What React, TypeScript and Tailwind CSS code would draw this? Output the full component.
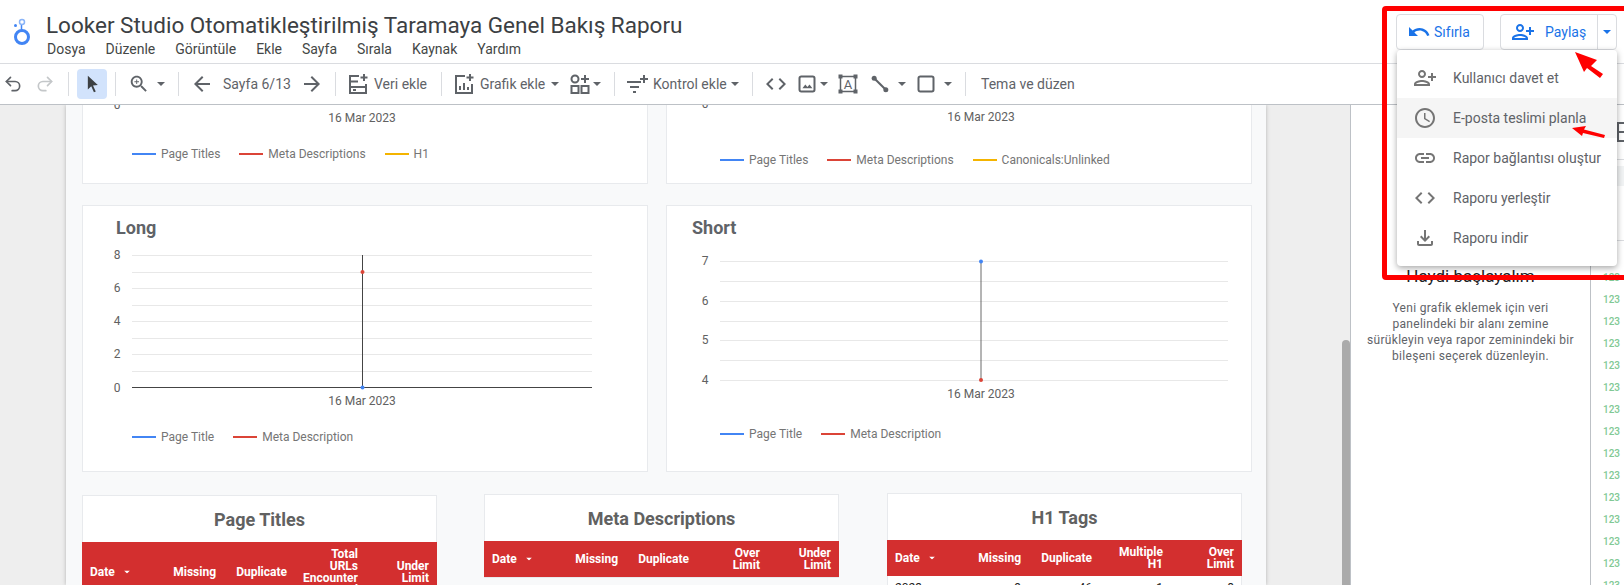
import React from 'react';
import { Undo2, Redo2 } from 'lucide-react';

const Caret = ({ className = 'text-[#5f6368]' }: { className?: string }) => (
  <svg width="8" height="4" viewBox="0 0 8 4" className={`shrink-0 ${className}`}>
    <path d="M0 0h8L4 4z" fill="currentColor" />
  </svg>
);

const Sep = ({ className }: { className: string }) => <div className={`w-px h-6 bg-[#dadce0] shrink-0 ${className}`} />;

const Icon = ({ size = 24, className = '', children }: { size?: number; className?: string; children: React.ReactNode }) => (
  <svg width={size} height={size} viewBox="0 0 24 24" fill="#5f6368" className={`shrink-0 ${className}`}>
    {children}
  </svg>
);

const PersonAdd = ({ fill }: { fill: string }) => (
  <svg width="24" height="24" viewBox="0 0 24 24" fill={fill} className="shrink-0">
    <path
      transform="matrix(-1 0 0 1 24 0)"
      d="M15 12c2.21 0 4-1.79 4-4s-1.79-4-4-4-4 1.79-4 4 1.79 4 4 4zm0-6c1.1 0 2 .9 2 2s-.9 2-2 2-2-.9-2-2 .9-2 2-2zm0 8c-2.67 0-8 1.34-8 4v2h16v-2c0-2.66-5.33-4-8-4zm-6 4c.22-.72 3.31-2 6-2 2.7 0 5.8 1.29 6 2H9zm-3-3v-3h3v-2H6V7H4v3H1v2h3v3h2z"
    />
  </svg>
);

const CodeIcon = ({ fill = '#5f6368' }: { fill?: string }) => (
  <svg width="24" height="24" viewBox="0 0 24 24" fill={fill} className="shrink-0">
    <path d="M9.4 16.6L4.8 12l4.6-4.6L8 6l-6 6 6 6 1.4-1.4zm5.2 0l4.6-4.6-4.6-4.6L16 6l6 6-6 6-1.4-1.4z" />
  </svg>
);

const Legend = ({ items, className }: { items: { color: string; label: string }[]; className: string }) => (
  <div className={`flex items-center gap-[19px] text-xs leading-4 text-[#757575] ${className}`}>
    {items.map((item) => (
      <div key={item.label} className="flex items-center gap-[5px]">
        <div className="w-6 h-0.5" style={{ backgroundColor: item.color }} />
        <span>{item.label}</span>
      </div>
    ))}
  </div>
);

const Table = ({ title, head, row, className }: { title: string; head: string[][]; row?: string[]; className: string }) => (
  <div className={`w-[355px] bg-white border border-[#e8eaed] ${className}`}>
    <div className="h-[46px] flex items-center justify-center text-[18px] font-bold text-[#616161]">{title}</div>
    <div className="-mx-px grid grid-cols-[1fr_71px_71px_71px_71px] items-center bg-[#d32f2f] text-white text-xs font-bold leading-3 py-1.5 min-h-9">
      <div className="pl-2 flex items-center gap-2">
        Date
        <Caret className="text-white scale-75" />
      </div>
      {head.map((lines) => (
        <div key={lines.join()} className="pr-2 text-right">
          {lines.map((line) => (
            <div key={line}>{line}</div>
          ))}
        </div>
      ))}
    </div>
    {row && (
      <div className="-mx-px grid grid-cols-[1fr_71px_71px_71px_71px] text-xs leading-3 text-[#212121] pt-1.5">
        {row.map((v, i) => (
          <div key={i} className={i === 0 ? 'pl-2' : 'pr-2 text-right'}>
            {v}
          </div>
        ))}
      </div>
    )}
  </div>
);

const longGrid = [14, 31, 47, 64, 80, 97, 113, 130];
const longTicks = [
  { y: 14, t: '8' },
  { y: 47, t: '6' },
  { y: 80, t: '4' },
  { y: 113, t: '2' },
  { y: 147, t: '0' },
];
const shortGrid = [20, 40, 60, 80, 99, 119, 139];
const shortTicks = [
  { y: 20, t: '7' },
  { y: 60, t: '6' },
  { y: 99, t: '5' },
  { y: 139, t: '4' },
];

const menuItems = [
  { label: 'Kullanıcı davet et', icon: <PersonAdd fill="#757575" /> },
  {
    label: 'E-posta teslimi planla',
    active: true,
    icon: (
      <svg width="24" height="24" viewBox="0 0 24 24" fill="#757575" className="shrink-0">
        <path d="M11.99 2C6.47 2 2 6.48 2 12s4.47 10 9.99 10C17.52 22 22 17.52 22 12S17.52 2 11.99 2zM12 20c-4.42 0-8-3.58-8-8s3.58-8 8-8 8 3.58 8 8-3.58 8-8 8z" />
        <path d="M12.5 7H11v6l5.25 3.15.75-1.23-4.5-2.67z" />
      </svg>
    ),
  },
  {
    label: 'Rapor bağlantısı oluştur',
    icon: (
      <svg width="24" height="24" viewBox="0 0 24 24" fill="#757575" className="shrink-0">
        <path d="M3.9 12c0-1.71 1.39-3.1 3.1-3.1h4V7H7c-2.76 0-5 2.24-5 5s2.24 5 5 5h4v-1.9H7c-1.71 0-3.1-1.39-3.1-3.1zM8 13h8v-2H8v2zm9-6h-4v1.9h4c1.71 0 3.1 1.39 3.1 3.1s-1.39 3.1-3.1 3.1h-4V17h4c2.76 0 5-2.24 5-5s-2.24-5-5-5z" />
      </svg>
    ),
  },
  { label: 'Raporu yerleştir', icon: <CodeIcon fill="#757575" /> },
  {
    label: 'Raporu indir',
    icon: (
      <svg width="24" height="24" viewBox="0 0 24 24" fill="#757575" className="shrink-0">
        <path d="M18 15v3H6v-3H4v3c0 1.1.9 2 2 2h12c1.1 0 2-.9 2-2v-3h-2zm-1-4l-1.41-1.41L13 12.17V4h-2v8.17L8.41 9.59 7 11l5 5 5-5z" />
      </svg>
    ),
  },
];

const greenRows = Array.from({ length: 15 }, (_, i) => i);

export default function App() {
  return (
    <div className="relative w-[1624px] h-[585px] overflow-hidden bg-white flex flex-col [font-family:Roboto,sans-serif]">
      {/* title bar */}
      <div className="h-[64px] shrink-0 border-b border-[#dadce0] flex">
        <svg width="46" height="63" viewBox="0 0 46 63" className="shrink-0">
          <circle cx="22" cy="37" r="6.5" fill="none" stroke="#4285f4" strokeWidth="3" />
          <path d="M21.5 25v5" stroke="#4285f4" strokeWidth="1.5" />
          <circle cx="22" cy="22" r="2.5" fill="none" stroke="#8ab4f8" strokeWidth="1.5" />
          <circle cx="15.5" cy="25.5" r="1.5" fill="#4285f4" />
        </svg>
        <div>
          <div className="pt-[10px] h-[39px] text-[22.5px] leading-[30px] text-[#3c4043] whitespace-nowrap">
            Looker Studio Otomatikleştirilmiş Taramaya Genel Bakış Raporu
          </div>
          <div className="pl-px flex gap-5 text-[14px] leading-5 text-[#444746]">
            {['Dosya', 'Düzenle', 'Görüntüle', 'Ekle', 'Sayfa', 'Sırala', 'Kaynak', 'Yardım'].map((m) => (
              <span key={m}>{m}</span>
            ))}
          </div>
        </div>
      </div>

      {/* toolbar */}
      <div className="h-[41px] shrink-0 border-b border-[#bdc1c6] flex items-center pl-[3px] text-[14px] text-[#5f6368] whitespace-nowrap">
        <Undo2 size={20} strokeWidth={2} className="shrink-0 text-[#5f6368]" />
        <Redo2 size={20} strokeWidth={2} className="shrink-0 ml-3 text-[#c4c7c9]" />
        <Sep className="ml-[13px]" />
        <div className="ml-2 w-[30px] h-[30px] shrink-0 rounded-sm bg-[#d2e3fc] flex items-center justify-center">
          <Icon size={20}>
            <path d="M7 2l12 11.2-5.8.5 3.3 7.3-2.2 1-3.2-7.4L7 18.5V2z" fill="#3c4043" />
          </Icon>
        </div>
        <Sep className="ml-2" />
        <Icon size={22} className="ml-3">
          <path d="M15.5 14h-.79l-.28-.27C15.41 12.59 16 11.11 16 9.5 16 5.91 13.09 3 9.5 3S3 5.91 3 9.5 5.91 16 9.5 16c1.61 0 3.09-.59 4.23-1.57l.27.28v.79l5 4.99L20.49 19l-4.99-5zm-6 0C7.01 14 5 11.99 5 9.5S7.01 5 9.5 5 14 7.01 14 9.5 11.99 14 9.5 14z" />
          <path d="M12 10h-2v2H9v-2H7V9h2V7h1v2h2v1z" />
        </Icon>
        <div className="ml-[7px]"><Caret /></div>
        <Sep className="ml-[13px]" />
        <Icon className="ml-[11px]">
          <path d="M20 11H7.83l5.59-5.59L12 4l-8 8 8 8 1.41-1.41L7.83 13H20v-2z" />
        </Icon>
        <span className="ml-[9px] w-[67px]">Sayfa 6/13</span>
        <Icon className="ml-[10px]">
          <path d="M12 4l-1.41 1.41L16.17 11H4v2h12.17l-5.58 5.59L12 20l8-8z" />
        </Icon>
        <Sep className="ml-[11px]" />
        <Icon className="ml-[10px]">
          <path d="M13 4H4v17h16v-9M4 9.5h8M4 15h16M7 18h3M18 2v7M14.5 5.5h7" fill="none" stroke="#5f6368" strokeWidth="2" />
        </Icon>
        <span className="ml-1 w-[53px]">Veri ekle</span>
        <Sep className="ml-[14px]" />
        <Icon className="ml-[10px]">
          <path d="M13 4H4v17h16v-9M8 18v-4M12 18v-7M16 18v-3M18 2v7M14.5 5.5h7" fill="none" stroke="#5f6368" strokeWidth="2" />
        </Icon>
        <span className="ml-1 w-[65px]">Grafik ekle</span>
        <div className="ml-[6px]"><Caret /></div>
        <Icon className="ml-[9px]">
          <circle cx="7" cy="7" r="3.5" fill="none" stroke="#5f6368" strokeWidth="2" />
          <path d="M17 3v8M13 7h8" fill="none" stroke="#5f6368" strokeWidth="2" />
          <rect x="3.5" y="14" width="7" height="7" fill="none" stroke="#5f6368" strokeWidth="2" />
          <rect x="13.5" y="14" width="7" height="7" fill="none" stroke="#5f6368" strokeWidth="2" />
        </Icon>
        <div className="ml-px"><Caret /></div>
        <Sep className="ml-[13px]" />
        <Icon className="ml-[10px]">
          <path d="M2 10h14M5 15h9M8 20h3M19 3v8M15 7h8" fill="none" stroke="#5f6368" strokeWidth="2" />
        </Icon>
        <span className="ml-1 w-[73px]">Kontrol ekle</span>
        <div className="ml-[5px]"><Caret /></div>
        <Sep className="ml-[13px]" />
        <div className="ml-[11px]"><CodeIcon /></div>
        <Icon size={20} className="ml-[9px]">
          <rect x="3" y="3" width="18" height="18" rx="2" fill="none" stroke="#5f6368" strokeWidth="2.4" />
          <path d="M6.5 17l3.5-4.5 2.5 3 2.5-3 3.5 4.5z" />
        </Icon>
        <div className="ml-[3px]"><Caret /></div>
        <svg width="20" height="20" viewBox="0 0 20 20" className="ml-[10px] shrink-0">
          <rect x="2.5" y="2.5" width="15" height="15" fill="none" stroke="#5f6368" strokeWidth="1.5" />
          <rect x="0.5" y="0.5" width="4" height="4" fill="#5f6368" />
          <rect x="15.5" y="0.5" width="4" height="4" fill="#5f6368" />
          <rect x="0.5" y="15.5" width="4" height="4" fill="#5f6368" />
          <rect x="15.5" y="15.5" width="4" height="4" fill="#5f6368" />
          <text x="10" y="14.5" textAnchor="middle" fontSize="13" fill="#5f6368">A</text>
        </svg>
        <Icon size={20} className="ml-3">
          <path d="M5 5l14 14" fill="none" stroke="#5f6368" strokeWidth="2.5" />
          <circle cx="5" cy="5" r="3" />
          <circle cx="19" cy="19" r="3" />
        </Icon>
        <div className="ml-2"><Caret /></div>
        <Icon size={20} className="ml-[10px]">
          <rect x="3" y="3" width="18" height="18" rx="2" fill="none" stroke="#5f6368" strokeWidth="2.4" />
        </Icon>
        <div className="ml-2"><Caret /></div>
        <Sep className="ml-[13px]" />
        <span className="ml-[15px]">Tema ve düzen</span>
      </div>

      {/* body */}
      <div className="flex-1 min-h-0 flex">
        {/* canvas */}
        <div className="relative w-[1350px] shrink-0 bg-[#eeeeee] overflow-hidden pl-[66px]">
          <div className="w-[1200px] h-full bg-[#f8f9fa] shadow-[0_0_4px_rgba(0,0,0,0.25)] pl-4">
            <div className="flex gap-[18px]">
              <div className="w-[566px] h-[79px] bg-white border border-t-0 border-[#e8eaed]">
                <svg width="564" height="20" className="block text-xs">
                  <text x="34" y="4" textAnchor="middle" fill="#616161">0</text>
                  <text x="279" y="17" textAnchor="middle" fill="#616161">16 Mar 2023</text>
                </svg>
                <Legend
                  className="pl-[49px] mt-[21px]"
                  items={[
                    { color: '#4285f4', label: 'Page Titles' },
                    { color: '#db4437', label: 'Meta Descriptions' },
                    { color: '#f4b400', label: 'H1' },
                  ]}
                />
              </div>
              <div className="w-[586px] h-[79px] bg-white border border-t-0 border-[#e8eaed]">
                <svg width="584" height="20" className="block text-xs">
                  <text x="38" y="3" textAnchor="middle" fill="#616161">0</text>
                  <text x="314" y="16" textAnchor="middle" fill="#616161">16 Mar 2023</text>
                </svg>
                <Legend
                  className="pl-[53px] mt-[27px]"
                  items={[
                    { color: '#4285f4', label: 'Page Titles' },
                    { color: '#db4437', label: 'Meta Descriptions' },
                    { color: '#f4b400', label: 'Canonicals:Unlinked' },
                  ]}
                />
              </div>
            </div>

            <div className="flex gap-[18px] mt-[21px]">
              <div className="w-[566px] h-[267px] bg-white border border-[#e8eaed] pt-3">
                <div className="pl-[33px] h-5 text-[18px] leading-5 font-bold text-[#5f6368]">Long</div>
                <svg width="564" height="170" className="block mt-[3px] text-xs">
                  {longGrid.map((y) => (
                    <line key={y} x1="49" x2="509" y1={y + 0.5} y2={y + 0.5} stroke="#e8e8e8" />
                  ))}
                  {longTicks.map((t) => (
                    <text key={t.t} x="34" y={t.y + 4} textAnchor="middle" fill="#616161">{t.t}</text>
                  ))}
                  <line x1="279.5" x2="279.5" y1="14" y2="147" stroke="#444" />
                  <line x1="49" x2="509" y1="146.5" y2="146.5" stroke="#444" />
                  <circle cx="279.5" cy="31" r="2" fill="#db4437" />
                  <circle cx="279.5" cy="146.5" r="2" fill="#4285f4" />
                  <text x="279" y="164" textAnchor="middle" fill="#616161">16 Mar 2023</text>
                </svg>
                <Legend
                  className="pl-[49px] mt-[18px]"
                  items={[
                    { color: '#4285f4', label: 'Page Title' },
                    { color: '#db4437', label: 'Meta Description' },
                  ]}
                />
              </div>
              <div className="w-[586px] h-[267px] bg-white border border-[#e8eaed] pt-3">
                <div className="pl-[25px] h-5 text-[18px] leading-5 font-bold text-[#5f6368]">Short</div>
                <svg width="584" height="170" className="block mt-[3px] text-xs">
                  {shortGrid.map((y) => (
                    <line key={y} x1="53" x2="561" y1={y + 0.5} y2={y + 0.5} stroke="#e8e8e8" />
                  ))}
                  {shortTicks.map((t) => (
                    <text key={t.t} x="38" y={t.y + 4} textAnchor="middle" fill="#616161">{t.t}</text>
                  ))}
                  <line x1="314" x2="314" y1="20" y2="139" stroke="#444" strokeWidth="0.8" />
                  <circle cx="314" cy="20.5" r="2" fill="#4285f4" />
                  <circle cx="314" cy="139" r="2" fill="#db4437" />
                  <text x="314" y="157" textAnchor="middle" fill="#616161">16 Mar 2023</text>
                </svg>
                <Legend
                  className="pl-[53px] mt-[15px]"
                  items={[
                    { color: '#4285f4', label: 'Page Title' },
                    { color: '#db4437', label: 'Meta Description' },
                  ]}
                />
              </div>
            </div>

            <div className="flex items-start mt-[21px]">
              <Table
                title="Page Titles"
                className="mt-0.5"
                head={[['Missing'], ['Duplicate'], ['Total', 'URLs', 'Encounter', 'ed'], ['Under', 'Limit']]}
              />
              <Table
                title="Meta Descriptions"
                className="mt-px ml-[47px]"
                head={[['Missing'], ['Duplicate'], ['Over', 'Limit'], ['Under', 'Limit']]}
              />
              <Table
                title="H1 Tags"
                className="ml-[48px]"
                head={[['Missing'], ['Duplicate'], ['Multiple', 'H1'], ['Over', 'Limit']]}
                row={['2023', '9', '46', '1', '8']}
              />
            </div>
          </div>
          {/* scrollbar */}
          <div className="absolute right-0 top-[235px] bottom-0 w-2 bg-[#aaaaaa] rounded-t-sm" />
        </div>

        {/* empty state panel */}
        <div className="w-[241px] shrink-0 border-x border-[#bdc1c6] pt-[159px] text-center">
          <div className="text-[17px] leading-6 text-[#202124]">Haydi başlayalım</div>
          <div className="mt-3 mx-auto w-[208px] text-xs leading-4 tracking-[0.3px] text-[#5f6368]">
            Yeni grafik eklemek için veri panelindeki bir alanı zemine sürükleyin veya rapor zeminindeki bir bileşeni seçerek düzenleyin.
          </div>
        </div>

        {/* field list */}
        <div className="flex-1 min-w-0 overflow-hidden">
          <div className="h-[17px]" />
          <div className="h-5 ml-[26px] flex flex-col justify-between border-l-2 border-[#5f6368]">
            <div className="h-0.5 bg-[#5f6368]" />
            <div className="h-0.5 bg-[#5f6368]" />
            <div className="h-0.5 bg-[#5f6368]" />
          </div>
          <div className="h-px mt-[17px] bg-[#dadce0]" />
          <div className="h-5 mt-1.5 bg-[#f1f3f4]" />
          <div className="h-px mt-[54px] bg-[#dadce0]" />
          <div className="mt-[26px] flex flex-col pl-3 text-[10px] leading-[22px] font-medium text-[#81c995]">
            {greenRows.map((i) => (
              <span key={i}>123</span>
            ))}
          </div>
        </div>
      </div>

      {/* share menu */}
      <div className="absolute left-[1396px] top-[14px] w-[88px] h-9 rounded border border-[#dadce0] bg-white flex items-center pl-[10px] gap-[3px] text-[14px] text-[#1a73e8]">
        <svg width="24" height="24" viewBox="0 0 24 24" fill="#1a73e8" className="shrink-0">
          <path d="M12.5 8c-2.65 0-5.05.99-6.9 2.6L2 7v9h9l-3.62-3.62c1.39-1.16 3.16-1.88 5.12-1.88 3.54 0 6.55 2.31 7.6 5.5l2.37-.78C21.08 11.03 17.15 8 12.5 8z" />
        </svg>
        Sıfırla
      </div>
      <div className="absolute left-[1500px] top-[14px] w-[117px] h-9 rounded border border-[#dadce0] bg-white flex items-center text-[14px] text-[#1a73e8]">
        <div className="w-[97px] h-full border-r border-[#dadce0] flex items-center pl-[10px] gap-[10px]">
          <PersonAdd fill="#1a73e8" />
          Paylaş
        </div>
        <div className="flex-1 flex items-center justify-center">
          <Caret className="text-[#1a73e8]" />
        </div>
      </div>
      <div className="absolute left-[1397px] top-[50px] w-[220px] rounded bg-white shadow-[0_2px_6px_rgba(0,0,0,0.35)] py-2 text-[14px] text-[#5f6368]">
        {menuItems.map((item) => (
          <div key={item.label} className={`h-10 flex items-center pl-4 gap-4 whitespace-nowrap ${item.active ? 'bg-[#f5f5f5]' : ''}`}>
            {item.icon}
            {item.label}
          </div>
        ))}
      </div>

      {/* annotations */}
      <div className="absolute left-[1382px] top-[6px] w-[260px] h-[274px] border-[5px] border-[#ff0000] rounded-sm pointer-events-none" />
      <svg width="64" height="110" viewBox="1560 40 64 110" className="absolute left-[1560px] top-[40px] pointer-events-none">
        <polygon points="1575,52 1597,60 1591,66 1603,74 1600,78 1587,68 1584,72" fill="#ff0000" />
        <polygon points="1572,128 1586,126 1584,129.5 1605,135 1604,138 1583,133 1582,136" fill="#ff0000" />
      </svg>
    </div>
  );
}
